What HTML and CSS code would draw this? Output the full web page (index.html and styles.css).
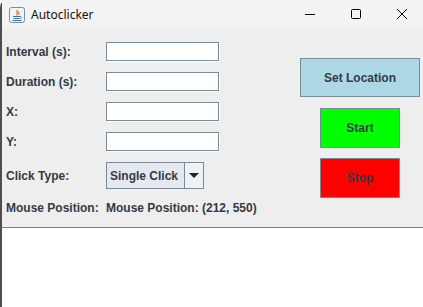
FILE: index.html
```html
<!DOCTYPE html>
<html>
<head>
    <title>Autoclicker</title>
    <meta name="viewport" content="width=device-width, initial-scale=1.0">
    <link rel="stylesheet" href="styles.css">
</head>
<body>
    <div class="window">
        <div class="titlebar">
            <svg class="app-icon" width="16" height="16" viewBox="0 0 16 16">
                <rect x="0.5" y="0.5" width="15" height="15" rx="2" fill="#eef3f8" stroke="#6f8fb3"/>
                <path d="M8.5 3 C6.5 5 9.5 6 7.5 8.5 M10 4.5 C9 6 10.5 6.5 9.5 8" stroke="#e2661a" stroke-width="1.1" fill="none"/>
                <path d="M4 9.5 H11 M4.5 11.5 H10.5 M3.5 13.5 H12.5" stroke="#3f6fa8" stroke-width="1"/>
                <path d="M11 9.5 C13 9.5 13 11.5 11 11.5" stroke="#3f6fa8" fill="none" stroke-width="0.9"/>
            </svg>
            <span class="title">Autoclicker</span>
            <div class="controls">
                <svg width="46" height="29" viewBox="0 0 46 29"><path d="M18 14.5 H28" stroke="#000" stroke-width="1"/></svg>
                <svg width="46" height="29" viewBox="0 0 46 29"><rect x="18.5" y="9.5" width="9" height="9" rx="1" fill="none" stroke="#000"/></svg>
                <svg width="46" height="29" viewBox="0 0 46 29"><path d="M18 9 L28 19 M28 9 L18 19" stroke="#000" stroke-width="1"/></svg>
            </div>
        </div>

        <div class="panel">
            <div class="form">
                <label class="lbl">Interval (s):</label>
                <input class="field" type="text">
                <label class="lbl">Duration (s):</label>
                <input class="field" type="text">
                <label class="lbl">X:</label>
                <input class="field" type="text">
                <label class="lbl">Y:</label>
                <input class="field" type="text">
                <label class="lbl combo-lbl">Click Type:</label>
                <div class="combo">
                    <span class="combo-text">Single Click</span>
                    <span class="combo-arrow">
                        <svg width="10" height="6" viewBox="0 0 10 6"><path d="M0 0 H10 L5 5 Z" fill="#222"/></svg>
                    </span>
                </div>
                <span class="lbl pos-lbl">Mouse Position:</span>
                <span class="lbl pos-val">Mouse Position: (212, 550)</span>
            </div>

            <div class="actions">
                <button class="btn btn-location">Set Location</button>
                <button class="btn btn-start">Start</button>
                <button class="btn btn-stop">Stop</button>
            </div>
        </div>

        <div class="output"></div>
    </div>
</body>
</html>
```

FILE: styles.css
```css
html, body { margin: 0; padding: 0; height: 100%; background: #fff; }
body { font-family: "Liberation Sans", Arial, sans-serif; overflow: hidden; }

.window { height: 100%; display: flex; flex-direction: column; border-left: 2px solid #4e4e4e; border-top-left-radius: 7px; background: #f3f3f3; }

.titlebar { height: 29px; display: flex; align-items: center; background: #f3f3f3; flex-shrink: 0; }
.app-icon { margin-left: 7px; margin-right: 6px; }
.title { font-family: "Noto Sans", "Open Sans", sans-serif; font-size: 12px; color: #111; }
.controls { margin-left: auto; display: flex; margin-right: -2px; }
.controls svg { display: block; }

.panel { height: 198px; background: #eeeeee; display: flex; box-sizing: border-box; padding: 13px 0 0 4px; flex-shrink: 0; }

.form { display: grid; grid-template-columns: 100px 113px; grid-template-rows: 19px 19px 19px 19px 27px 14px; row-gap: 11px; align-items: center; }
.form .combo-lbl { margin-top: 1px; }
.form .pos-lbl, .form .pos-val { margin-top: 1px; white-space: nowrap; }

.lbl { font-size: 12px; font-weight: bold; color: #333a44; }

.field { width: 113px; height: 19px; box-sizing: border-box; border: 1px solid #7a8a99; background: #fff; margin: 0; padding: 0 2px; box-shadow: 1px 1px 0 #fff; outline: none; }

.combo { width: 98px; height: 27px; box-sizing: border-box; border: 1px solid #7a8a99; display: flex; background: #dde4ec; }
.combo-text { flex: 1; display: flex; align-items: center; padding-left: 3px; font-size: 12px; font-weight: bold; color: #333a44; background: #e4e9ef; border-right: 1px solid #7a8a99; }
.combo-arrow { width: 18px; display: flex; align-items: center; justify-content: center; background: #eef1f5; }

.actions { margin-left: auto; width: 120px; margin-right: 3px; display: flex; flex-direction: column; align-items: center; padding-top: 16px; }

.btn { font-family: "Liberation Sans", Arial, sans-serif; font-size: 12px; font-weight: bold; color: #333a44; border: 1px solid #7a8a99; padding: 0; margin: 0; }
.btn-location { width: 120px; height: 39px; background: #add8e6; }
.btn-start { width: 80px; height: 40px; background: #00ff00; margin-top: 11px; }
.btn-stop { width: 80px; height: 40px; background: #ff0000; margin-top: 10px; }

.output { flex: 1; background: #fff; border-top: 1px solid #6f7f8e; }
```
